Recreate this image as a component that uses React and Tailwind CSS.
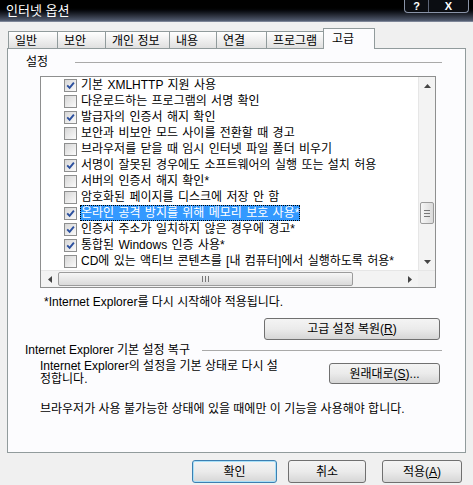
import React from "react";

const rows = [
  [true, "기본 XMLHTTP 지원 사용"],
  [false, "다운로드하는 프로그램의 서명 확인"],
  [true, "발급자의 인증서 해지 확인"],
  [false, "보안과 비보안 모드 사이를 전환할 때 경고"],
  [false, "브라우저를 닫을 때 임시 인터넷 파일 폴더 비우기"],
  [true, "서명이 잘못된 경우에도 소프트웨어의 실행 또는 설치 허용"],
  [false, "서버의 인증서 해지 확인*"],
  [false, "암호화된 페이지를 디스크에 저장 안 함"],
  [true, "온라인 공격 방지를 위해 메모리 보호 사용*", true],
  [true, "인증서 주소가 일치하지 않은 경우에 경고*"],
  [true, "통합된 Windows 인증 사용*"],
  [false, "CD에 있는 액티브 콘텐츠를 [내 컴퓨터]에서 실행하도록 허용*"],
];

function Check({ on }) {
  return (
    <span className="w-[13px] h-[13px] shrink-0 border border-[#8e8f8f] bg-gradient-to-br from-[#d6d6d6] to-[#fbfbfb] flex items-center justify-center">
      {on && (
        <svg width="9" height="9" viewBox="0 0 9 9">
          <path d="M1.2 4.4 L3.6 6.8 L7.9 1.6" fill="none" stroke="#2a4f9e" strokeWidth="1.9" />
        </svg>
      )}
    </span>
  );
}

function Btn({ children, className = "", def = false }) {
  return (
    <div
      className={
        "flex items-center justify-center rounded-[3px] border bg-gradient-to-b from-[#f4f4f4] via-[#ebebeb] to-[#d6d6d6] text-[12px] leading-[14px] text-black " +
        (def ? "border-[#3c7fb1] shadow-[inset_0_0_0_1px_#a8e0f8] " : "border-[#707070] ") +
        className
      }
    >
      {children}
    </div>
  );
}

function Tab({ label, w, sel }) {
  if (sel) {
    return (
      <div
        className={`${w} h-[21px] -mb-px z-10 border border-b-0 border-[#919b9c] bg-[#fcfcfe] pl-[8px] pt-[3px] text-[12px] leading-[14px]`}
      >
        {label}
      </div>
    );
  }
  return (
    <div
      className={`${w} h-[17px] border border-b-0 border-[#919b9c] bg-gradient-to-b from-[#ffffff] to-[#e0e0e0] pl-[6px] pt-[2px] text-[12px] leading-[14px] -mr-px`}
    >
      {label}
    </div>
  );
}

export default function App() {
  return (
    <div className="w-[473px] h-[485px] overflow-hidden bg-[#f0f0f0] text-black text-[12px] leading-[14px] font-[family-name:'Liberation_Sans','Noto_Sans_CJK_KR',sans-serif] flex flex-col">
      {/* Title bar */}
      <div className="h-[22px] shrink-0 flex items-start justify-between bg-gradient-to-b from-[#000000] from-[30%] to-[#566075] border-b border-[#7d8597]">
        <div className="pl-[6px] pt-[3px] text-white text-[13px] leading-[16px]">인터넷 옵션</div>
        <div className="mr-[4px] flex h-[13px] border border-t-0 border-[#8a94a8] rounded-b-[4px] bg-[#0b0d12] text-white text-[11px] leading-[12px] font-bold">
          <div className="w-[24px] flex items-center justify-center border-r border-[#5d6577]">?</div>
          <div className="w-[39px] flex items-center justify-center">X</div>
        </div>
      </div>

      {/* Tabs */}
      <div className="mt-[6px] pl-[8px] flex items-end">
        <Tab label="일반" w="w-[50px]" />
        <Tab label="보안" w="w-[49px]" />
        <Tab label="개인 정보" w="w-[65px]" />
        <Tab label="내용" w="w-[48px]" />
        <Tab label="연결" w="w-[51px]" />
        <Tab label="프로그램" w="w-[58px]" />
        <Tab label="고급" w="w-[52px]" sel />
      </div>

      {/* Panel */}
      <div className="mx-[7px] w-[459px] h-[405px] shrink-0 border border-[#919b9c] bg-[#fcfcfe] flex flex-col">
        <div className="mt-[6px] h-[14px] flex items-center pl-[18px] pr-[23px]">
          <span>설정</span>
          <div className="ml-[27px] flex-1 border-t border-[#a9a9a9]" />
        </div>

        {/* List box */}
        <div className="mt-[7px] ml-[32px] w-[396px] h-[212px] border border-[#8e8f8f] bg-white flex flex-col">
          <div className="flex h-[193px]">
            <div className="flex-1 overflow-hidden flex flex-col">
              {rows.map(([on, text, sel], i) => (
                <div key={i} className="h-[16px] shrink-0 flex items-center pl-[23px] whitespace-nowrap [word-spacing:1px]">
                  <Check on={on} />
                  <span
                    className={
                      sel
                        ? "ml-[3px] h-[16px] px-[1px] flex items-center bg-[#3399ff] text-white outline outline-1 outline-dotted outline-black -outline-offset-1"
                        : "ml-[3px] h-[16px] px-[1px] flex items-center"
                    }
                  >
                    {text}
                  </span>
                </div>
              ))}
            </div>
            {/* Vertical scrollbar */}
            <div className="w-[17px] bg-[#f3f3f3] border-l border-[#e6e6e6] flex flex-col items-center">
              <div className="h-[17px] flex items-center justify-center">
                <svg width="7" height="4" viewBox="0 0 7 4"><path d="M0 4 L3.5 0 L7 4Z" fill="#444" /></svg>
              </div>
              <div className="mt-[108px] w-[14px] h-[22px] rounded-[2px] border border-[#9b9b9b] bg-gradient-to-r from-[#f6f6f6] to-[#dadada] flex flex-col items-center justify-center gap-[2px]">
                <div className="w-[6px] border-t border-[#777]" />
                <div className="w-[6px] border-t border-[#777]" />
                <div className="w-[6px] border-t border-[#777]" />
              </div>
              <div className="mt-auto h-[17px] flex items-center justify-center">
                <svg width="7" height="4" viewBox="0 0 7 4"><path d="M0 0 L3.5 4 L7 0Z" fill="#444" /></svg>
              </div>
            </div>
          </div>
          {/* Horizontal scrollbar */}
          <div className="flex h-[17px] border-t border-[#e6e6e6]">
            <div className="flex-1 bg-[#f3f3f3] flex items-center">
              <div className="w-[17px] h-[17px] flex items-center justify-center">
                <svg width="4" height="7" viewBox="0 0 4 7"><path d="M4 0 L0 3.5 L4 7Z" fill="#444" /></svg>
              </div>
              <div className="w-[295px] h-[14px] rounded-[2px] border border-[#9b9b9b] bg-gradient-to-b from-[#f6f6f6] to-[#dadada] flex items-center justify-center gap-[2px]">
                <div className="h-[6px] border-l border-[#777]" />
                <div className="h-[6px] border-l border-[#777]" />
                <div className="h-[6px] border-l border-[#777]" />
              </div>
              <div className="ml-auto w-[17px] h-[17px] flex items-center justify-center">
                <svg width="4" height="7" viewBox="0 0 4 7"><path d="M0 0 L4 3.5 L0 7Z" fill="#444" /></svg>
              </div>
            </div>
            <div className="w-[17px] bg-[#f0f0f0]" />
          </div>
        </div>

        <div className="mt-[7px] pl-[36px] h-[14px]">*Internet Explorer를 다시 시작해야 적용됩니다.</div>

        <Btn className="mt-[9px] self-end mr-[25px] w-[176px] h-[22px]">
          고급 설정 복원(<span className="underline">R</span>)
        </Btn>

        <div className="mt-[3px] h-[14px] flex items-center pl-[17px] pr-[23px]">
          <span className="whitespace-nowrap">Internet Explorer 기본 설정 복구</span>
          <div className="ml-[12px] flex-1 border-t border-[#a9a9a9]" />
        </div>

        <div className="mt-[3px] flex items-start pl-[32px] pr-[25px]">
          <div className="w-[280px] leading-[13px] whitespace-nowrap">
            Internet Explorer의 설정을 기본 상태로 다시 설
            <br />
            정합니다.
          </div>
          <Btn className="mt-[3px] ml-auto w-[111px] h-[21px]">
            원래대로(<span className="underline">S</span>)...
          </Btn>
        </div>

        <div className="mt-[16px] pl-[32px] h-[14px] whitespace-nowrap">
          브라우저가 사용 불가능한 상태에 있을 때에만 이 기능을 사용해야 합니다.
        </div>
      </div>

      {/* Bottom buttons */}
      <div className="mt-[7px] flex pl-[192px]">
        <Btn def className="w-[85px] h-[23px]">확인</Btn>
        <Btn className="ml-[11px] w-[78px] h-[23px]">취소</Btn>
        <Btn className="ml-[16px] w-[80px] h-[23px]">
          적용(<span className="underline">A</span>)
        </Btn>
      </div>
    </div>
  );
}
